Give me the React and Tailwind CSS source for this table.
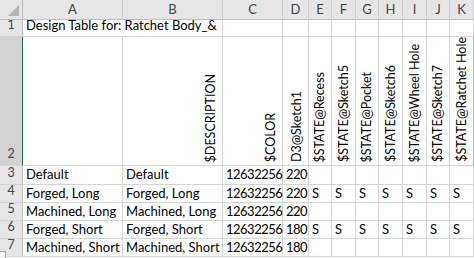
const cols = ["A", "B", "C", "D", "E", "F", "G", "H", "I", "J", "K"];

const headers = [
  "",
  "$DESCRIPTION",
  "$COLOR",
  "D3@Sketch1",
  "$STATE@Recess",
  "$STATE@Sketch5",
  "$STATE@Pocket",
  "$STATE@Sketch6",
  "$STATE@Wheel Hole",
  "$STATE@Sketch7",
  "$STATE@Ratchet Hole",
];

const rows = [
  ["Default", "Default", "12632256", "220", "", "", "", "", "", "", ""],
  ["Forged, Long", "Forged, Long", "12632256", "220", "S", "S", "S", "S", "S", "S", "S"],
  ["Machined, Long", "Machined, Long", "12632256", "220", "", "", "", "", "", "", ""],
  ["Forged, Short", "Forged, Short", "12632256", "180", "S", "S", "S", "S", "S", "S", "S"],
  ["Machined, Short", "Machined, Short", "12632256", "180", "", "", "", "", "", "", ""],
];

const font = { fontFamily: "Lato, 'Liberation Sans', sans-serif" };

function RowHead({ n, selected }) {
  return (
    <div
      className={
        "flex items-end justify-center border-b border-r border-b-[#d4d4d4] pb-px text-[12.5px] text-[#444] " +
        (selected ? "bg-[#d2d2d2] border-r-[#217346]" : "bg-[#e6e6e6] border-r-[#bdbdbd]")
      }
    >
      {n}
    </div>
  );
}

export default function App() {
  return (
    <div className="relative h-[258px] w-[474px] overflow-hidden bg-white text-black" style={font}>
      <div className="grid grid-cols-[23px_100px_100px_60px_26px_23px_24px_23px_24px_24px_23px_24px] grid-rows-[20px_17px_129px_19px_18px_18px_18px_18px]">
        {/* corner + column letters */}
        <div className="relative border-b border-r border-[#bdbdbd] bg-[#e6e6e6]">
          <div className="absolute bottom-[3px] right-[3px] h-0 w-0 border-b-[11px] border-l-[11px] border-b-[#b4b4b4] border-l-transparent" />
        </div>
        {cols.map((c) => (
          <div
            key={c}
            className="flex items-center justify-center border-b border-r border-b-[#bdbdbd] border-r-[#d0d0d0] bg-[#e6e6e6] text-[13px] text-[#444]"
          >
            {c}
          </div>
        ))}

        {/* row 1: title spills over B */}
        <RowHead n={1} />
        <div className="col-span-2 flex items-end whitespace-nowrap border-b border-r border-[#d4d4d4] pb-px pl-[3px] text-[13px]">
          Design Table for: Ratchet Body_&amp;
        </div>
        {cols.slice(2).map((c) => (
          <div key={c} className="border-b border-r border-[#d4d4d4]" />
        ))}

        {/* row 2: rotated parameter names */}
        <RowHead n={2} selected />
        {headers.map((h, i) => (
          <div
            key={i}
            className={
              "flex items-end justify-end border-b border-r border-b-[#d4d4d4] pb-[3px] pr-[2px] " +
              (i === 10 ? "border-r-[#8cc8a2]" : "border-r-[#d4d4d4]")
            }
          >
            {h && (
              <span className="rotate-180 whitespace-nowrap text-[12.5px] leading-[18px] [writing-mode:vertical-rl]">
                {h}
              </span>
            )}
          </div>
        ))}

        {/* configuration rows */}
        {rows.map((r, ri) => (
          <div key={ri} className="contents">
            <RowHead n={ri + 3} />
            {r.map((v, ci) => (
              <div
                key={ci}
                className={
                  "flex items-center whitespace-nowrap border-b border-r border-[#d4d4d4] pl-[3px] text-[13px] " +
                  (ci === 2 || ci === 3 ? "tracking-[-0.5px]" : "")
                }
              >
                {v}
              </div>
            ))}
          </div>
        ))}
      </div>

      {/* paste options tag peeking at the bottom-left */}
      <div className="absolute bottom-[-3px] left-[-3px] h-[10px] w-[9px] border border-[#a6a6a6] bg-[#f4f4f4]" />
    </div>
  );
}
